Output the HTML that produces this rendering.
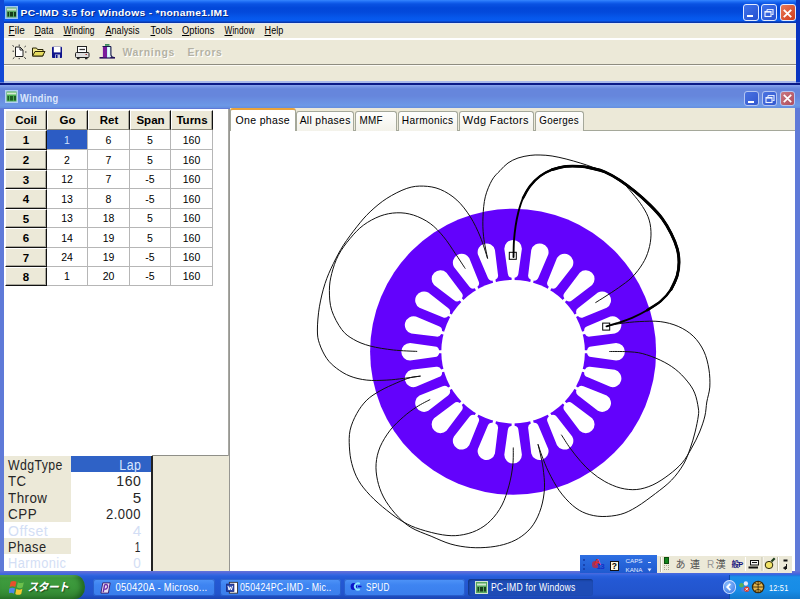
<!DOCTYPE html>
<html>
<head>
<meta charset="utf-8">
<title>PC-IMD 3.5 for Windows</title>
<style>
html,body{margin:0;padding:0;}
body{width:800px;height:599px;overflow:hidden;position:relative;background:#ece9d8;font-family:"Liberation Sans","Noto Sans CJK JP",sans-serif;font-size:11px;color:#000;}
.abs{position:absolute;}
.fx{display:inline-block;white-space:nowrap;transform-origin:0 0;}
#titlebar{left:0;top:0;width:800px;height:23px;background:linear-gradient(#3686ff 0,#1a68f2 2px,#0a52e2 4px,#0247d9 8px,#0349db 12px,#0658ec 18px,#085af0 20.5px,#0a44c0 21.8px,#0a2c9a 23px);}
#title{left:21px;top:6.5px;color:#fff;font-weight:bold;font-size:9.5px;letter-spacing:0.3px;white-space:nowrap;text-shadow:1px 1px 0 #0a2c88;}
.wb{top:4px;width:16px;height:17px;border:1px solid #e4ecff;border-radius:3px;box-sizing:border-box;background:linear-gradient(135deg,#3f72ea,#2450d0);}
.wb.close{background:linear-gradient(135deg,#e87a58,#d23c1c);}
.cb{top:91px;width:15px;height:15px;border:1px solid #b4c6f2;border-radius:3px;box-sizing:border-box;background:linear-gradient(135deg,#4a72e0,#3258d0);}
.cb.close{background:linear-gradient(135deg,#c87880,#b04c5c);}
#menubar{left:4px;top:23px;width:792px;height:15px;background:#ece9d8;}
.mi{top:25px;font-size:10px;white-space:nowrap;letter-spacing:0.1px;}
.mi u{text-decoration:underline;}
#frameL{left:0;top:0;width:4px;height:85px;background:#1148d6;}
#frameR{left:796px;top:0;width:4px;height:85px;background:#0a35c0;}
#childframe{left:0;top:82px;width:800px;height:493px;background:#5f7ad8;}
#childtitle{left:0;top:85px;width:800px;height:23px;background:linear-gradient(#8aa6ee 0,#7494e4 2px,#6686dc 4px,#6686dc 11px,#6a90e2 16px,#6c98e6 20.5px,#6690e0 22.5px,#90a8e0 23px);}
#tabbar{left:230px;top:108px;width:565px;height:23px;background:#ece9d8;}
.tab{top:110.5px;height:20.5px;box-sizing:border-box;border:1px solid #a5a89a;border-bottom:none;border-radius:3px 3px 0 0;background:linear-gradient(#fefefd,#f3f2ea);font-size:11px;text-align:center;line-height:17px;white-space:nowrap;letter-spacing:0.35px;}
.tab.sel{top:108px;height:23px;background:#fff;border-top:2px solid #e8a33c;line-height:20px;}
th,td{padding:0;}
.hd{background:#ece9d8;font-weight:bold;font-size:11.5px;text-align:center;box-sizing:border-box;border-right:1px solid #111;border-bottom:1px solid #111;border-top:1px solid #fff;border-left:1px solid #fff;box-shadow:inset -1px -1px 0 rgba(0,0,0,.28);}
.hd.top{border-bottom:1px solid #8c8a7c;box-shadow:inset -1px 0 0 rgba(0,0,0,.28);}
.cell{background:#fff;font-size:10.5px;text-align:center;box-sizing:border-box;border-right:1px solid #b6b6b6;border-bottom:1px solid #b6b6b6;}
.prow{left:4px;width:147px;height:16.4px;font-size:14px;line-height:18px;color:#262626;}
.prow .fx{position:relative;z-index:2;}
.plab{position:absolute;left:0;top:0;width:67px;height:100%;background:#ece9d8;padding-left:4px;box-sizing:border-box;letter-spacing:0.5px;white-space:nowrap;}
.pval{position:absolute;left:67px;top:0;width:80px;height:100%;background:#fff;text-align:right;padding-right:10px;box-sizing:border-box;letter-spacing:0.5px;}
.dis .plab{background:#fff;color:#d3def5;}
.dis .pval{color:#d3def5;}
#taskbar{left:0;top:571px;width:800px;height:28px;background:linear-gradient(#6674da 0,#5068da 2px,#3868e2 3.5px,#2a60dc 5px,#2459d5 8px,#2254cc 23px,#1b45b2 28px);}
#start{left:0;top:574.5px;width:85px;height:24.5px;border-radius:0 11px 11px 0/0 13px 13px 0;background:linear-gradient(#63b862 0,#3f9c3f 3px,#3a963a 13px,#2e7e2e 25px);box-shadow:inset -4px 0 5px rgba(0,40,0,.4);}
.tb{top:579px;height:17px;border-radius:3px;background:linear-gradient(#5095f8,#3e84f1 35%,#3a7eec);box-shadow:inset 0 0 0 1px rgba(20,60,170,.5);color:#fff;font-size:10.5px;line-height:16px;white-space:nowrap;overflow:hidden;letter-spacing:0.3px;}
.tb.act{background:#1e4cb6;box-shadow:inset 1px 1px 2px #12347e;}
#tray{left:729px;top:575px;width:71px;height:24px;background:linear-gradient(#2470dc 0,#1a8fe8 2px,#178ce6 16px,#1278cc 24px);border-left:1px solid #0d4aa8;box-sizing:border-box;}
</style>
</head>
<body>
<!-- main window frame -->
<div class="abs" id="titlebar"></div>
<div class="abs" id="frameL"></div>
<div class="abs" id="frameR"></div>
<svg class="abs" style="left:5px;top:6px" width="13" height="13" viewBox="0 0 13 13"><rect x="0" y="0" width="13" height="13" fill="#9cc4f4"/><rect x="1.5" y="1.5" width="10" height="10" fill="#58a860"/><rect x="2" y="2.5" width="9" height="2" fill="#cfe6d0"/><rect x="2.5" y="6" width="1.5" height="4.5" fill="#143c1c"/><rect x="5" y="6" width="3" height="4.5" fill="#143c1c"/><rect x="9" y="6" width="2" height="4.5" fill="#143c1c"/></svg>
<div class="abs" id="title"><span class="fx" id="f_title" style="transform:translateX(-0.50px) scaleX(1.080)">PC-IMD 3.5 for Windows - *noname1.IM1</span></div>
<div class="abs wb" style="left:743px"><div class="abs" style="left:3px;top:9.500px;width:6px;height:2.500px;background:#fff"></div></div>
<div class="abs wb" style="left:761px"><svg class="abs" style="left:1px;top:2px" width="12" height="12" viewBox="0 0 12 12"><path d="M4,2.500 h6 v5 h-1.500 M4,2.500 v1.500" stroke="#dbe6ff" stroke-width="1.200" fill="none"/><rect x="2" y="4.500" width="6" height="5" stroke="#eef3ff" stroke-width="1.100" fill="none"/><path d="M2,4.800 h6" stroke="#eef3ff" stroke-width="1.600"/></svg></div>
<div class="abs wb close" style="left:779.500px"><svg class="abs" style="left:2.500px;top:3.500px" width="9" height="9" viewBox="0 0 9 9"><path d="M0.800,0.800 L8.200,8.200 M8.200,0.800 L0.800,8.200" stroke="#fff" stroke-width="1.900"/></svg></div>

<div class="abs" id="menubar"></div>
<div class="abs" style="left:4px;top:23px;width:792px;height:1px;background:#e2e9f6"></div>
<div class="abs mi" style="left:9px"><span class="fx" id="f_m_file" style="transform:translateX(-0.50px) scaleX(0.998)"><u>F</u>ile</span></div>
<div class="abs mi" style="left:35px"><span class="fx" id="f_m_data" style="transform:translateX(-0.50px) scaleX(0.882)"><u>D</u>ata</span></div>
<div class="abs mi" style="left:64px"><span class="fx" id="f_m_winding" style="transform:translateX(-0.50px) scaleX(0.841)"><u>W</u>inding</span></div>
<div class="abs mi" style="left:106px"><span class="fx" id="f_m_analysis" style="transform:translateX(-0.50px) scaleX(0.893)"><u>A</u>nalysis</span></div>
<div class="abs mi" style="left:151px"><span class="fx" id="f_m_tools" style="transform:translateX(-0.50px) scaleX(0.922)"><u>T</u>ools</span></div>
<div class="abs mi" style="left:182px"><span class="fx" id="f_m_options" style="transform:translateX(0.00px) scaleX(0.924)"><u>O</u>ptions</span></div>
<div class="abs mi" style="left:225px"><span class="fx" id="f_m_window" style="transform:translateX(-0.50px) scaleX(0.829)"><u>W</u>indow</span></div>
<div class="abs mi" style="left:265px"><span class="fx" id="f_m_help" style="transform:translateX(-0.50px) scaleX(0.905)"><u>H</u>elp</span></div>
<div class="abs" style="left:4px;top:38px;width:792px;height:2px;background:#fff"></div>
<!-- toolbar icons -->
<svg class="abs" style="left:10px;top:42px" width="110" height="20" viewBox="0 0 110 20">
<path d="M5.500,5 h4.500 l3,3 v6.500 h-7.500 z" fill="#fff" stroke="#222" stroke-width="1"/>
<path d="M10,5 v3 h3" fill="none" stroke="#222" stroke-width="1"/>
<path d="M2.500,3.500 l1.500,1 M9.200,2.500 v1.500 M15.800,4 l-1.300,1 M2.500,9.200 h1.500 M15,10 h1.500 M2.800,16.800 l1.700,-1.500 M9.200,16 v1.200 M16,16.800 l-1.700,-1.500" stroke="#333" stroke-width="1"/>
<path d="M22.500,6 h4 l1,1.500 h5.500 v6.500 h-10.500 z" fill="#f1e98e" stroke="#2a2608" stroke-width="1"/>
<path d="M22.500,14 l2.500,-4.500 h10 l-2.500,4.500 z" fill="#e6dc60" stroke="#2a2608" stroke-width="1"/>
<rect x="42" y="4.800" width="10" height="11.200" rx="0.800" fill="#10148c"/>
<rect x="43.800" y="5" width="6.700" height="5.400" fill="#fff"/>
<rect x="45" y="12.500" width="5" height="3.500" fill="#c8cce0"/>
<rect x="45.800" y="13" width="1.700" height="3" fill="#10148c"/>
<rect x="67.500" y="4.500" width="9" height="6" fill="#fff" stroke="#222" stroke-width="1"/>
<path d="M69.500,7.500 h5.500" stroke="#333" stroke-width="1.300"/>
<rect x="65.500" y="10.500" width="13.500" height="5" rx="1" fill="#dcdcdc" stroke="#222" stroke-width="1"/>
<path d="M67,16.500 h2.500 M75,16.500 h2.500" stroke="#222" stroke-width="1.500"/>
<rect x="75.500" y="12" width="1.500" height="1" fill="#a03030"/>
<path d="M89.500,15.800 h15.500" stroke="#28105c" stroke-width="1.600"/>
<rect x="92.900" y="4.400" width="4.100" height="11" fill="#7a1c9c"/>
<rect x="97" y="5" width="3.400" height="10.400" fill="#c8f2fa"/>
<rect x="98.300" y="5.500" width="1" height="9" fill="#fff"/>
<path d="M100.900,4.500 v8 q0,2.500 3,3" fill="none" stroke="#181850" stroke-width="1.100"/>
<path d="M92.500,4.500 h8.500" stroke="#181850" stroke-width="1"/>
<rect x="95" y="2" width="4.500" height="1.800" fill="#3c8c5c"/>
</svg>
<div class="abs" style="left:123px;top:46px;font-size:10.5px;font-weight:bold;color:#b4b2a4;letter-spacing:0.7px;text-shadow:1px 1px 0 #fff"><span class="fx" id="f_warn" style="transform:translateX(-0.50px) scaleX(0.990)">Warnings</span></div>
<div class="abs" style="left:188px;top:46px;font-size:10.5px;font-weight:bold;color:#b4b2a4;letter-spacing:0.7px;text-shadow:1px 1px 0 #fff"><span class="fx" id="f_err" style="transform:translateX(-0.50px) scaleX(0.980)">Errors</span></div>
<div class="abs" style="left:4px;top:64px;width:792px;height:1px;background:#8e8c80"></div>
<div class="abs" style="left:4px;top:65px;width:792px;height:1px;background:#fbfaf4"></div>

<!-- child window -->
<div class="abs" id="childframe"></div>
<div class="abs" id="childtitle"></div>
<div class="abs" style="left:4px;top:81px;width:792px;height:1.500px;background:#a9baec"></div>
<div class="abs" style="left:0;top:82.500px;width:800px;height:2.500px;background:#0a1a86"></div>
<svg class="abs" style="left:5px;top:90px" width="13" height="13" viewBox="0 0 13 13"><rect x="0" y="0" width="13" height="13" fill="#b4d0f4"/><rect x="1.500" y="1.500" width="10" height="10" fill="#4cb050"/><rect x="2" y="2.500" width="9" height="2" fill="#d4ead4"/><rect x="2.500" y="6" width="1.500" height="4.500" fill="#1c5c24"/><rect x="5" y="6" width="3" height="4.500" fill="#1c5c24"/><rect x="9" y="6" width="2" height="4.500" fill="#1c5c24"/></svg>
<div class="abs" style="left:21px;top:92.5px;color:#dbe6fb;font-weight:bold;font-size:10px;letter-spacing:0.3px"><span class="fx" id="f_ctitle" style="transform:translateX(-0.90px) scaleX(0.926)">Winding</span></div>
<div class="abs cb" style="left:744px"><div class="abs" style="left:3px;top:8.500px;width:6px;height:2.500px;background:#fff"></div></div>
<div class="abs cb" style="left:762px"><svg class="abs" style="left:0.500px;top:1px" width="12" height="12" viewBox="0 0 12 12"><path d="M4,2.500 h6 v5 h-1.500 M4,2.500 v1.500" stroke="#dbe6ff" stroke-width="1.200" fill="none"/><rect x="2" y="4.500" width="6" height="5" stroke="#eef3ff" stroke-width="1.100" fill="none"/><path d="M2,4.800 h6" stroke="#eef3ff" stroke-width="1.600"/></svg></div>
<div class="abs cb close" style="left:780px"><svg class="abs" style="left:2px;top:2px" width="9" height="9" viewBox="0 0 9 9"><path d="M0.800,0.800 L8.200,8.200 M8.200,0.800 L0.800,8.200" stroke="#fff" stroke-width="1.700"/></svg></div>

<!-- left pane -->
<div class="abs" style="left:4px;top:108.500px;width:224px;height:347px;background:#fff"></div>
<div class="abs" style="left:227.500px;top:108.500px;width:2.500px;height:462.500px;background:linear-gradient(90deg,#b0b0aa,#8e8e8a)"></div>
<!-- right pane -->
<div class="abs" style="left:230px;top:131px;width:565px;height:440px;background:#fff"></div>
<div class="abs" id="tabbar"></div>
<div class="abs" style="left:230px;top:130px;width:565px;height:1px;background:#a5a89a"></div>
<div class="abs tab sel" style="left:230px;width:66px"><span class="fx" id="f_tab_one" style="transform:translateX(0.48px) scaleX(0.957)">One phase</span></div>
<div class="abs tab" style="left:296px;width:58px"><span class="fx" id="f_tab_all" style="transform:translateX(1.64px) scaleX(0.940)">All phases</span></div>
<div class="abs tab" style="left:355px;width:42px;text-align:left;padding-left:5px"><span class="fx" id="f_tab_mmf" style="transform:translateX(-1.50px) scaleX(0.900)">MMF</span></div>
<div class="abs tab" style="left:398px;width:60px"><span class="fx" id="f_tab_harm" style="transform:translateX(1.86px) scaleX(0.924)">Harmonics</span></div>
<div class="abs tab" style="left:459px;width:75px"><span class="fx" id="f_tab_wdg" style="transform:translateX(-0.19px) scaleX(0.998)">Wdg Factors</span></div>
<div class="abs tab" style="left:535px;width:49px"><span class="fx" id="f_tab_goe" style="transform:translateX(2.33px) scaleX(0.889)">Goerges</span></div>

<!-- table -->
<table class="abs" style="left:5px;top:110px;border-collapse:separate;border-spacing:0;table-layout:fixed;width:208px">
<colgroup><col style="width:42px"><col style="width:41px"><col style="width:42px"><col style="width:41px"><col style="width:42px"></colgroup>
<tr style="height:20px"><td class="hd top">Coil</td><td class="hd top">Go</td><td class="hd top">Ret</td><td class="hd top">Span</td><td class="hd top">Turns</td></tr>
<tr style="height:20px"><td class="hd">1</td><td class="cell" style="background:#2c5cc4;color:#cfe2ff">1</td><td class="cell">6</td><td class="cell">5</td><td class="cell">160</td></tr>
<tr style="height:20px"><td class="hd">2</td><td class="cell">2</td><td class="cell">7</td><td class="cell">5</td><td class="cell">160</td></tr>
<tr style="height:19px"><td class="hd">3</td><td class="cell">12</td><td class="cell">7</td><td class="cell">-5</td><td class="cell">160</td></tr>
<tr style="height:20px"><td class="hd">4</td><td class="cell">13</td><td class="cell">8</td><td class="cell">-5</td><td class="cell">160</td></tr>
<tr style="height:19px"><td class="hd">5</td><td class="cell">13</td><td class="cell">18</td><td class="cell">5</td><td class="cell">160</td></tr>
<tr style="height:20px"><td class="hd">6</td><td class="cell">14</td><td class="cell">19</td><td class="cell">5</td><td class="cell">160</td></tr>
<tr style="height:19px"><td class="hd">7</td><td class="cell">24</td><td class="cell">19</td><td class="cell">-5</td><td class="cell">160</td></tr>
<tr style="height:19px"><td class="hd">8</td><td class="cell">1</td><td class="cell">20</td><td class="cell">-5</td><td class="cell">160</td></tr>
</table>

<!-- parameter box -->
<div class="abs" style="left:4px;top:456px;width:225px;height:115px;background:#ece9d8"></div>
<div class="abs" style="left:151px;top:456px;width:1.500px;height:115px;background:#222"></div>
<div class="abs" style="left:152px;top:455px;width:76px;height:1px;background:#8f8f88"></div>
<div class="abs prow" style="top:456px"><div class="plab"><span class="fx" id="f_pl_wdgtype" style="transform:translateX(-0.10px) scaleX(0.878)">WdgType</span></div><div class="pval" style="background:#2f62c6;color:#d6e6ff"><span class="fx" id="f_pv_lap" style="transform:translateX(3.36px) scaleX(0.885)">Lap</span></div></div>
<div class="abs prow" style="top:472.400px"><div class="plab"><span class="fx" id="f_pl_tc" style="transform:translateX(0.00px) scaleX(0.940)">TC</span></div><div class="pval"><span class="fx" id="f_pv_160" style="transform:translateX(0.36px) scaleX(1.006)">160</span></div></div>
<div class="abs prow" style="top:488.800px"><div class="plab"><span class="fx" id="f_pl_throw" style="transform:translateX(0.00px) scaleX(0.954)">Throw</span></div><div class="pval"><span class="fx" id="f_pv_5" style="transform:translateX(-0.20px) scaleX(1.085)">5</span></div></div>
<div class="abs prow" style="top:505.200px"><div class="plab"><span class="fx" id="f_pl_cpp" style="transform:translateX(0.00px) scaleX(0.960)">CPP</span></div><div class="pval"><span class="fx" id="f_pv_2000" style="transform:translateX(3.05px) scaleX(0.932)">2.000</span></div></div>
<div class="abs prow dis" style="top:521.600px"><div class="plab"><span class="fx" id="f_pl_offset" style="transform:translateX(0.00px) scaleX(1.003)">Offset</span></div><div class="pval"><span class="fx" id="f_pv_4" style="transform:translateX(-0.20px) scaleX(1.085)">4</span></div></div>
<div class="abs prow" style="top:538px"><div class="plab"><span class="fx" id="f_pl_phase" style="transform:translateX(0.00px) scaleX(0.912)">Phase</span></div><div class="pval"><span class="fx" id="f_pv_1" style="transform:translateX(1.80px) scaleX(0.723)">1</span></div></div>
<div class="abs prow dis" style="top:554.400px;height:16.600px"><div class="plab"><span class="fx" id="f_pl_harmonic" style="transform:translateX(0.00px) scaleX(0.915)">Harmonic</span></div><div class="pval"><span class="fx" id="f_pv_0" style="transform:translateX(0.30px) scaleX(0.964)">0</span></div></div>

<svg width="800" height="599" viewBox="0 0 800 599" style="position:absolute;left:0;top:0">
<circle cx="513.1" cy="351.7" r="143.0" fill="#6302fc"/>
<circle cx="513.1" cy="351.7" r="71.8" fill="#fff"/>
<path d="M583.90,353.20 L587.10,353.20 Q587.70,356.70 591.30,357.00 L616.10,360.50 A8.80,8.80 0 0 0 616.10,342.90 L591.30,346.40 Q587.70,346.70 587.10,350.20 L583.90,350.20 Z M581.88,334.82 L584.97,334.00 Q586.45,337.22 590.01,336.58 L614.87,333.54 A8.80,8.80 0 0 0 610.31,316.54 L587.26,326.34 Q583.86,327.56 584.19,331.10 L581.10,331.93 Z M575.16,317.60 L577.94,316.00 Q580.21,318.73 583.47,317.19 L606.70,307.82 A8.80,8.80 0 0 0 597.90,292.58 L578.17,308.01 Q575.21,310.07 576.44,313.40 L573.66,315.00 Z M564.22,302.70 L566.49,300.43 Q569.39,302.49 572.14,300.15 L592.15,285.09 A8.80,8.80 0 0 0 579.71,272.65 L564.65,292.66 Q562.31,295.41 564.37,298.31 L562.10,300.58 Z M549.80,291.14 L551.40,288.36 Q554.73,289.59 556.79,286.63 L572.22,266.90 A8.80,8.80 0 0 0 556.98,258.10 L547.61,281.33 Q546.07,284.59 548.80,286.86 L547.20,289.64 Z M532.87,283.70 L533.70,280.61 Q537.24,280.94 538.46,277.54 L548.26,254.49 A8.80,8.80 0 0 0 531.26,249.93 L528.22,274.79 Q527.58,278.35 530.80,279.83 L529.98,282.92 Z M514.60,280.90 L514.60,277.70 Q518.10,277.10 518.40,273.50 L521.90,248.70 A8.80,8.80 0 0 0 504.30,248.70 L507.80,273.50 Q508.10,277.10 511.60,277.70 L511.60,280.90 Z M496.22,282.92 L495.40,279.83 Q498.62,278.35 497.98,274.79 L494.94,249.93 A8.80,8.80 0 0 0 477.94,254.49 L487.74,277.54 Q488.96,280.94 492.50,280.61 L493.33,283.70 Z M479.00,289.64 L477.40,286.86 Q480.13,284.59 478.59,281.33 L469.22,258.10 A8.80,8.80 0 0 0 453.98,266.90 L469.41,286.63 Q471.47,289.59 474.80,288.36 L476.40,291.14 Z M464.10,300.58 L461.83,298.31 Q463.89,295.41 461.55,292.66 L446.49,272.65 A8.80,8.80 0 0 0 434.05,285.09 L454.06,300.15 Q456.81,302.49 459.71,300.43 L461.98,302.70 Z M452.54,315.00 L449.76,313.40 Q450.99,310.07 448.03,308.01 L428.30,292.58 A8.80,8.80 0 0 0 419.50,307.82 L442.73,317.19 Q445.99,318.73 448.26,316.00 L451.04,317.60 Z M445.10,331.93 L442.01,331.10 Q442.34,327.56 438.94,326.34 L415.89,316.54 A8.80,8.80 0 0 0 411.33,333.54 L436.19,336.58 Q439.75,337.22 441.23,334.00 L444.32,334.82 Z M442.30,350.20 L439.10,350.20 Q438.50,346.70 434.90,346.40 L410.10,342.90 A8.80,8.80 0 0 0 410.10,360.50 L434.90,357.00 Q438.50,356.70 439.10,353.20 L442.30,353.20 Z M444.32,368.58 L441.23,369.40 Q439.75,366.18 436.19,366.82 L411.33,369.86 A8.80,8.80 0 0 0 415.89,386.86 L438.94,377.06 Q442.34,375.84 442.01,372.30 L445.10,371.47 Z M451.04,385.80 L448.26,387.40 Q445.99,384.67 442.73,386.21 L419.50,395.58 A8.80,8.80 0 0 0 428.30,410.82 L448.03,395.39 Q450.99,393.33 449.76,390.00 L452.54,388.40 Z M461.98,400.70 L459.71,402.97 Q456.81,400.91 454.06,403.25 L434.05,418.31 A8.80,8.80 0 0 0 446.49,430.75 L461.55,410.74 Q463.89,407.99 461.83,405.09 L464.10,402.82 Z M476.40,412.26 L474.80,415.04 Q471.47,413.81 469.41,416.77 L453.98,436.50 A8.80,8.80 0 0 0 469.22,445.30 L478.59,422.07 Q480.13,418.81 477.40,416.54 L479.00,413.76 Z M493.33,419.70 L492.50,422.79 Q488.96,422.46 487.74,425.86 L477.94,448.91 A8.80,8.80 0 0 0 494.94,453.47 L497.98,428.61 Q498.62,425.05 495.40,423.57 L496.22,420.48 Z M511.60,422.50 L511.60,425.70 Q508.10,426.30 507.80,429.90 L504.30,454.70 A8.80,8.80 0 0 0 521.90,454.70 L518.40,429.90 Q518.10,426.30 514.60,425.70 L514.60,422.50 Z M529.98,420.48 L530.80,423.57 Q527.58,425.05 528.22,428.61 L531.26,453.47 A8.80,8.80 0 0 0 548.26,448.91 L538.46,425.86 Q537.24,422.46 533.70,422.79 L532.87,419.70 Z M547.20,413.76 L548.80,416.54 Q546.07,418.81 547.61,422.07 L556.98,445.30 A8.80,8.80 0 0 0 572.22,436.50 L556.79,416.77 Q554.73,413.81 551.40,415.04 L549.80,412.26 Z M562.10,402.82 L564.37,405.09 Q562.31,407.99 564.65,410.74 L579.71,430.75 A8.80,8.80 0 0 0 592.15,418.31 L572.14,403.25 Q569.39,400.91 566.49,402.97 L564.22,400.70 Z M573.66,388.40 L576.44,390.00 Q575.21,393.33 578.17,395.39 L597.90,410.82 A8.80,8.80 0 0 0 606.70,395.58 L583.47,386.21 Q580.21,384.67 577.94,387.40 L575.16,385.80 Z M581.10,371.47 L584.19,372.30 Q583.86,375.84 587.26,377.06 L610.31,386.86 A8.80,8.80 0 0 0 614.87,369.86 L590.01,366.82 Q586.45,366.18 584.97,369.40 L581.88,368.58 Z" fill="#fff"/>
<path d="M595.4,302.7 C597.0,301.7 601.1,299.2 605.0,296.7 C608.9,294.2 614.1,290.9 618.6,287.7 C623.1,284.4 628.1,281.2 632.1,277.2 C636.1,273.2 639.9,268.2 642.6,263.7 C645.4,259.2 647.2,254.9 648.6,250.1 C650.0,245.3 650.9,240.1 651.0,235.1 C651.1,230.1 650.6,224.8 649.2,220.1 C647.8,215.3 645.5,211.1 642.6,206.6 C639.8,202.1 635.9,197.4 632.1,193.0 C628.4,188.6 624.8,183.9 620.1,180.4 C615.5,176.9 608.9,174.2 604.2,172.0 C599.6,169.8 596.2,168.5 592.2,167.0 C588.2,165.5 584.6,164.3 580.2,163.0 C575.9,161.7 570.8,160.2 566.1,159.0 C561.4,157.8 556.4,156.7 552.1,156.0 C547.8,155.3 543.8,155.1 540.1,155.0 C536.4,154.9 533.8,154.9 530.1,155.4 C526.4,155.9 521.7,156.7 518.0,158.0 C514.3,159.3 511.0,160.9 508.0,163.0 C505.0,165.1 502.7,167.8 500.0,170.7 C497.3,173.5 494.4,175.8 492.0,180.1 C489.6,184.4 486.8,190.7 485.3,196.8 C483.8,202.9 483.3,210.1 483.0,216.8 C482.7,223.5 482.8,229.9 483.6,236.8 C484.4,243.8 486.9,254.9 487.6,258.5" fill="none" stroke="#111" stroke-width="1"/>
<path d="M487.6,258.5 C486.4,254.9 483.2,243.8 480.3,236.8 C477.4,229.9 474.2,222.9 470.3,216.8 C466.4,210.7 461.9,204.7 456.9,200.1 C451.9,195.5 445.8,191.7 440.2,189.4 C434.6,187.1 429.1,186.3 423.5,186.1 C417.9,185.9 412.9,186.3 406.8,188.4 C400.7,190.5 392.9,194.5 386.8,198.4 C380.7,202.3 375.1,207.1 370.1,211.8 C365.1,216.5 361.2,221.2 356.8,226.8 C352.4,232.4 347.3,239.1 343.4,245.2 C339.5,251.3 336.5,257.1 333.4,263.5 C330.3,269.9 327.3,276.4 325.0,283.6 C322.7,290.8 320.7,299.1 319.4,306.8 C318.1,314.5 317.4,323.9 317.4,330.0 C317.4,336.1 317.8,338.7 319.4,343.4 C320.9,348.1 323.8,354.2 326.7,358.4 C329.6,362.6 332.8,365.4 336.7,368.4 C340.6,371.3 345.0,374.2 350.0,376.1 C355.0,378.1 360.7,379.4 366.8,380.1 C372.9,380.8 380.7,380.4 386.8,380.1 C392.9,379.8 397.9,379.1 403.5,378.4 C409.1,377.7 417.7,376.5 420.5,376.1" fill="none" stroke="#111" stroke-width="1"/>
<path d="M465.3,268.6 C463.6,266.1 458.9,258.8 455.3,253.5 C451.7,248.2 447.8,241.8 443.6,236.8 C439.4,231.8 435.2,227.1 430.2,223.5 C425.2,219.9 419.1,216.9 413.5,215.1 C407.9,213.3 402.4,212.6 396.8,212.8 C391.2,213.0 385.7,214.0 380.1,216.1 C374.5,218.2 368.4,221.5 363.4,225.2 C358.4,228.9 354.3,233.5 350.1,238.5 C345.9,243.5 341.5,249.3 338.4,255.2 C335.3,261.1 333.2,267.8 331.7,273.6 C330.2,279.5 329.4,284.2 329.4,290.3 C329.4,296.4 329.6,303.8 331.7,310.3 C333.8,316.8 338.1,324.7 341.7,329.5 C345.3,334.3 348.7,336.6 353.4,339.3 C358.1,342.1 363.4,344.2 370.1,346.0 C376.8,347.8 385.6,349.1 393.5,350.0 C401.4,350.9 413.2,351.2 417.2,351.4" fill="none" stroke="#111" stroke-width="1"/>
<path d="M420.5,376.1 C418.8,376.4 414.1,376.6 410.2,377.7 C406.2,378.8 401.8,380.6 396.8,382.8 C391.8,385.0 385.1,387.9 380.1,390.8 C375.1,393.7 370.7,396.3 366.8,400.1 C362.9,403.9 359.6,408.5 356.8,413.5 C354.0,418.5 351.3,424.6 350.1,430.2 C348.9,435.8 349.1,441.3 349.4,446.9 C349.7,452.5 350.3,458.0 351.8,463.6 C353.3,469.2 355.3,475.0 358.4,480.3 C361.4,485.6 365.4,490.3 370.1,495.3 C374.8,500.3 381.2,505.9 386.8,510.3 C392.4,514.8 397.9,518.8 403.5,522.0 C409.1,525.2 413.7,527.2 420.2,529.3 C426.7,531.4 435.9,533.8 442.4,534.8 C448.9,535.8 453.7,536.0 459.4,535.3 C465.1,534.6 471.3,533.0 476.5,530.5 C481.7,528.0 486.4,524.9 490.6,520.6 C494.9,516.4 498.9,510.9 502.0,505.0 C505.1,499.1 507.3,491.7 509.1,485.1 C510.9,478.5 512.1,471.5 512.8,465.2 C513.5,458.9 513.2,450.4 513.3,447.5" fill="none" stroke="#111" stroke-width="1"/>
<path d="M430.2,399.5 C428.0,400.7 421.3,403.9 416.9,406.8 C412.4,409.7 407.9,412.9 403.5,416.8 C399.1,420.7 394.1,425.2 390.2,430.2 C386.3,435.2 382.5,441.3 380.1,446.9 C377.8,452.5 376.5,458.0 376.1,463.6 C375.7,469.2 376.3,474.7 377.5,480.3 C378.7,485.9 380.6,491.4 383.5,497.0 C386.4,502.6 390.8,508.6 395.2,513.6 C399.6,518.6 404.2,523.2 410.2,527.0 C416.2,530.8 424.3,533.4 431.1,536.2 C437.9,539.1 444.3,542.2 450.9,544.1 C457.5,546.0 464.2,547.0 470.8,547.5 C477.4,548.0 484.5,547.7 490.6,547.0 C496.8,546.3 502.5,545.1 507.7,543.3 C512.9,541.5 517.5,539.3 521.8,536.2 C526.0,533.1 530.0,529.5 533.2,524.8 C536.4,520.1 539.2,514.0 541.1,507.8 C543.0,501.7 544.2,494.5 544.5,487.9 C544.8,481.3 543.8,473.8 543.1,468.1 C542.4,462.4 541.1,457.9 540.3,453.9 C539.4,449.9 538.4,445.9 538.0,444.3" fill="none" stroke="#111" stroke-width="1"/>
<path d="M609.3,351.5 C612.3,351.5 621.6,351.4 627.1,351.7 C632.6,352.0 636.7,352.1 642.2,353.5 C647.7,354.9 654.7,357.5 660.2,360.1 C665.7,362.7 670.7,365.6 675.2,369.1 C679.7,372.6 684.0,377.1 687.2,381.1 C690.5,385.1 692.9,388.6 694.7,393.1 C696.6,397.6 697.7,404.2 698.3,408.0 C698.9,411.8 698.8,412.0 698.3,416.0 C697.8,420.0 696.4,426.6 695.1,432.0 C693.8,437.4 692.2,442.8 690.3,448.1 C688.4,453.5 686.7,458.8 683.6,464.1 C680.5,469.4 676.3,475.2 671.6,480.1 C666.9,485.0 661.3,489.1 655.5,493.5 C649.7,497.9 642.6,503.3 636.8,506.8 C631.0,510.3 626.6,512.7 620.8,514.3 C615.0,515.9 607.9,516.6 602.1,516.5 C596.3,516.4 591.0,515.3 586.1,513.5 C581.2,511.7 577.2,509.3 572.7,505.5 C568.2,501.7 563.4,496.4 559.4,490.8 C555.4,485.2 551.6,477.9 548.7,472.1 C545.8,466.3 543.8,460.7 542.0,456.1 C540.2,451.5 538.7,446.3 538.0,444.3" fill="none" stroke="#111" stroke-width="1"/>
<path d="M606.5,326.3 C608.9,325.8 615.6,324.2 621.1,323.4 C626.6,322.6 632.7,321.9 639.2,321.6 C645.7,321.3 653.7,320.8 660.2,321.6 C666.7,322.4 672.7,324.0 678.2,326.4 C683.7,328.8 688.9,332.0 693.2,336.1 C697.5,340.2 701.2,345.6 703.8,351.1 C706.4,356.6 707.9,363.1 708.9,369.1 C709.9,375.1 710.1,381.6 709.8,387.1 C709.4,392.6 707.6,397.2 706.8,402.0 C706.0,406.8 706.1,411.0 704.9,416.0 C703.7,421.0 701.8,426.6 699.6,432.0 C697.4,437.4 694.5,443.0 691.6,448.1 C688.7,453.2 686.0,458.4 682.2,462.8 C678.4,467.2 673.8,471.1 668.9,474.8 C664.0,478.5 658.2,482.4 652.9,484.9 C647.5,487.3 642.1,489.0 636.8,489.5 C631.4,490.0 626.1,489.4 620.8,488.1 C615.5,486.8 609.7,484.2 604.8,481.5 C599.9,478.8 595.4,475.5 591.4,472.1 C587.4,468.8 584.2,465.4 580.7,461.4 C577.2,457.4 573.3,452.6 570.1,448.1 C566.9,443.7 562.8,436.9 561.3,434.7" fill="none" stroke="#111" stroke-width="1"/>
<path d="M513.5,257.0 C513.6,254.2 513.6,245.3 514.0,240.2 C514.4,235.1 514.9,230.9 515.6,226.2 C516.3,221.5 517.2,216.8 518.4,212.1 C519.6,207.4 521.0,202.4 523.0,198.1 C525.0,193.8 527.2,189.8 530.1,186.1 C533.0,182.4 536.4,178.8 540.1,176.1 C543.8,173.3 547.8,171.2 552.1,169.6 C556.4,168.0 561.4,166.9 566.1,166.4 C570.8,165.9 575.9,166.1 580.2,166.4 C584.6,166.7 588.1,167.5 592.2,168.4 C596.3,169.3 600.4,170.0 605.0,172.0 C609.6,174.0 615.1,177.1 620.1,180.4 C625.1,183.7 630.1,187.5 635.1,191.6 C640.1,195.7 645.6,200.6 650.1,205.1 C654.6,209.6 658.7,213.8 662.2,218.6 C665.7,223.3 668.7,228.6 671.2,233.6 C673.7,238.6 675.9,243.8 677.2,248.6 C678.5,253.4 679.0,257.7 679.0,262.2 C679.0,266.7 678.5,271.2 677.2,275.7 C675.9,280.2 674.0,284.9 671.2,289.2 C668.5,293.4 664.7,297.7 660.7,301.2 C656.7,304.7 651.9,307.4 647.1,310.2 C642.3,313.0 637.1,315.6 632.1,317.8 C627.1,320.0 621.4,321.8 617.1,323.2 C612.8,324.6 608.3,325.8 606.5,326.3" fill="none" stroke="#000" stroke-width="1.9" stroke-linecap="round"/>
<path d="M523.0,198.1 C524.2,196.1 527.2,189.8 530.1,186.1 C533.0,182.4 536.4,178.8 540.1,176.1 C543.8,173.3 547.8,171.2 552.1,169.6 C556.4,168.0 561.4,166.9 566.1,166.4 C570.8,165.9 575.9,166.1 580.2,166.4 C584.6,166.7 588.1,167.5 592.2,168.4 C596.3,169.3 600.4,170.0 605.0,172.0 C609.6,174.0 615.1,177.1 620.1,180.4 C625.1,183.7 630.1,187.5 635.1,191.6 C640.1,195.7 645.6,200.6 650.1,205.1 C654.6,209.6 658.7,213.8 662.2,218.6 C665.7,223.3 668.7,228.6 671.2,233.6 C673.7,238.6 675.9,243.8 677.2,248.6 C678.5,253.4 679.0,257.7 679.0,262.2 C679.0,266.7 678.5,271.2 677.2,275.7 C675.9,280.2 674.0,284.9 671.2,289.2 C668.5,293.4 664.7,297.7 660.7,301.2 C656.7,304.7 649.4,308.7 647.1,310.2" fill="none" stroke="#000" stroke-width="2.4" stroke-linecap="round"/>
<path d="M552.1,169.6 C554.4,169.1 561.4,166.9 566.1,166.4 C570.8,165.9 575.9,166.1 580.2,166.4 C584.6,166.7 588.1,167.5 592.2,168.4 C596.3,169.3 600.4,170.0 605.0,172.0 C609.6,174.0 615.1,177.1 620.1,180.4 C625.1,183.7 630.1,187.5 635.1,191.6 C640.1,195.7 645.6,200.6 650.1,205.1 C654.6,209.6 658.7,213.8 662.2,218.6 C665.7,223.3 668.7,228.6 671.2,233.6 C673.7,238.6 675.9,243.8 677.2,248.6 C678.5,253.4 679.0,257.7 679.0,262.2 C679.0,266.7 678.5,271.2 677.2,275.7 C675.9,280.2 672.2,286.9 671.2,289.2" fill="none" stroke="#000" stroke-width="2.9" stroke-linecap="round"/>
<rect x="509.3" y="252.3" width="7" height="7" fill="none" stroke="#000" stroke-width="1"/>
<rect x="602.7" y="323.1" width="7" height="7" fill="none" stroke="#000" stroke-width="1"/>
</svg>

<!-- taskbar -->
<div class="abs" id="taskbar"></div>
<div class="abs" id="start"></div>
<svg class="abs" style="left:9px;top:578.5px" width="16" height="16" viewBox="0 0 14 14"><path d="M1.500,2.500 q2.500,-1.500 5,0 l-1,4.500 q-2.500,-1.500 -5,0 z" fill="#e8502c"/><path d="M7.800,2.800 q2.500,1.500 5.200,0 l-1,4.500 q-2.500,1.500 -5.200,0 z" fill="#6cc04c"/><path d="M0.300,8.300 q2.500,-1.500 5,0 l-1,4.500 q-2.500,-1.500 -5,0 z" fill="#4c88e8"/><path d="M6.500,8.600 q2.500,1.500 5.200,0 l-1,4.500 q-2.500,1.500 -5.200,0 z" fill="#f4c830"/></svg>
<div class="abs" style="left:29px;top:578px;color:#fff;font-weight:bold;font-style:italic;font-size:11.5px;line-height:18px;letter-spacing:-0.5px;text-shadow:1px 1px 1px #1c4c1c;white-space:nowrap"><span class="fx" id="f_start" style="transform:translateX(-1.50px) scaleX(0.932)">スタート</span></div>
<div class="abs tb" style="left:93px;width:122px"><span class="fx" id="f_tb1" style="margin-left:24px;transform:translateX(-1.50px) scaleX(0.899)">050420A - Microso...</span></div>
<svg class="abs" style="left:100px;top:580.5px" width="13" height="14" viewBox="0 0 14 15"><path d="M3,2 h8 l-2,11 h-8 z" fill="#e8e0f4" stroke="#3a1c6c"/><path d="M5,4 q4,-1 3,3 q-1,2 -3,2 M5,4 l-1.500,8" stroke="#6c2ca8" stroke-width="1.500" fill="none"/></svg>
<div class="abs tb" style="left:220px;width:121px"><span class="fx" id="f_tb2" style="margin-left:22px;transform:translateX(-2.00px) scaleX(0.833)">050424PC-IMD - Mic..</span></div>
<svg class="abs" style="left:225.5px;top:581px" width="13" height="13.5" viewBox="0 0 14 15"><rect x="3.500" y="1.500" width="9" height="12" fill="#fff" stroke="#333"/><rect x="0.500" y="3.500" width="8" height="8" fill="#2c4cb0" stroke="#14247c"/><path d="M2,5.500 l1.200,4.500 l1.300,-3.500 l1.300,3.500 l1.200,-4.500" stroke="#fff" fill="none" stroke-width="1.100"/></svg>
<div class="abs tb" style="left:344px;width:121px"><span class="fx" id="f_tb3" style="margin-left:32px;transform:translateX(-10.00px) scaleX(0.774)">SPUD</span></div>
<svg class="abs" style="left:350px;top:582px" width="13" height="9" viewBox="0 0 13 9"><ellipse cx="3.800" cy="4.500" rx="3.200" ry="3.600" fill="#0c14c8"/><path d="M9.800,1.800 a3.200,3.200 0 1 0 0,5.400" fill="none" stroke="#8ae6ff" stroke-width="2"/><path d="M8,4.500 h3.500" stroke="#0c14c8" stroke-width="1.500"/></svg>
<div class="abs tb act" style="left:468px;width:125px"><span class="fx" id="f_tb4" style="margin-left:25px;transform:translateX(-2.10px) scaleX(0.818)">PC-IMD for Windows</span></div>
<svg class="abs" style="left:475px;top:581px" width="13" height="13" viewBox="0 0 13 13"><rect x="0" y="0" width="13" height="13" fill="#cfe4d0"/><rect x="1" y="1" width="11" height="11" fill="#58a860"/><rect x="2" y="2.500" width="9" height="2" fill="#cfe6d0"/><rect x="2.500" y="6" width="1.500" height="4.500" fill="#143c1c"/><rect x="5" y="6" width="3" height="4.500" fill="#143c1c"/><rect x="9" y="6" width="2" height="4.500" fill="#143c1c"/></svg>
<div class="abs" id="tray"></div>
<div class="abs" style="left:723px;top:580px;width:13px;height:14px;border-radius:8px;background:radial-gradient(circle at 40% 35%,#8cc0ff,#2a68e0);box-shadow:0 0 0 1px #cfe0ff inset"></div>
<svg class="abs" style="left:725px;top:583px" width="8" height="8" viewBox="0 0 9 9"><path d="M6,1 L2.500,4.500 L6,8" stroke="#fff" stroke-width="2" fill="none"/></svg>
<svg class="abs" style="left:738px;top:580px" width="28" height="14" viewBox="0 0 32 16"><circle cx="4" cy="6" r="2.500" fill="#58b058"/><circle cx="9" cy="4" r="2.500" fill="#e8e8f8"/><circle cx="6" cy="11" r="2.500" fill="#4880e0"/><circle cx="10" cy="10.500" r="3" fill="#e03828"/><path d="M8.500,9 l3,3 M11.500,9 l-3,3" stroke="#fff" stroke-width="1"/><circle cx="23" cy="8" r="6.500" fill="#e8b84c" stroke="#3a2c0c" stroke-width="1.500"/><path d="M17,8 h12 M23,2 v12 M19.500,4 q3.500,2.500 7,0 M19.500,12 q3.500,-2.500 7,0" stroke="#3a2c0c" stroke-width="1" fill="none"/></svg>
<div class="abs" style="left:769px;top:581px;color:#fff;font-size:9.5px;line-height:13px;letter-spacing:0.3px"><span class="fx" id="f_clock" style="transform:translateX(-0.10px) scaleX(0.775)">12:51</span></div>
<!-- language bar -->
<div class="abs" style="left:580px;top:555px;width:77px;height:18px;background:linear-gradient(#2e6fe2,#1f5ad0)"></div>
<div class="abs" style="left:657px;top:555px;width:135px;height:18px;background:#ece9d8;border-top:1px solid #fff;box-sizing:border-box"></div>
<div class="abs" style="left:583px;top:559px;width:2px;height:11px;border-left:2px dotted #1844b0"></div>
<div class="abs" style="left:592px;top:561px;width:6px;height:7px;background:#c02840;border-radius:3px 1px 1px 3px;opacity:.8"></div>
<div class="abs" style="left:594px;top:557px;font-size:9.500px;font-weight:bold;color:#e62a2a;line-height:10px">A</div>
<div class="abs" style="left:596.500px;top:563px;font-size:8px;font-weight:bold;color:#1430c8;line-height:8px;letter-spacing:-0.8px">13</div>
<div class="abs" style="left:610px;top:560.500px;width:8.500px;height:10px;background:#fbf8e4;border:1px solid #111;box-sizing:border-box;font-size:8.500px;font-weight:bold;line-height:8px;text-align:center">?</div>
<div class="abs" style="left:626px;top:557px;font-size:6px;color:#e6eeff;line-height:8px;white-space:nowrap"><span class="fx" id="f_caps" style="transform:translateX(-0.50px) scaleX(1.040)">CAPS</span></div>
<div class="abs" style="left:626px;top:565.500px;font-size:6px;color:#e6eeff;line-height:8px;white-space:nowrap"><span class="fx" id="f_kana" style="transform:translateX(-0.50px) scaleX(1.040)">KANA</span></div>
<div class="abs" style="left:648px;top:561.500px;width:3px;height:1.500px;background:#dfe8ff"></div>
<svg class="abs" style="left:647px;top:567.500px" width="5" height="4" viewBox="0 0 5 4"><path d="M0.500,0.500 h4 l-2,3 z" fill="#dfe8ff"/></svg>
<div class="abs" style="left:660px;top:557px;width:2px;height:15px;border-left:1px solid #b8b4a0;border-right:1px solid #fff;box-sizing:border-box"></div>
<div class="abs" style="left:664px;top:557px;width:5px;height:6.500px;background:#14841c;border:1px solid #0c4c0c;box-sizing:border-box"></div>
<div class="abs" style="left:664px;top:565px;width:5px;height:5px;border:1px dotted #a8a494;box-sizing:border-box"></div>
<div class="abs" style="left:675.500px;top:558px;font-size:10px;line-height:13px;color:#555">あ</div>
<div class="abs" style="left:690px;top:558px;font-size:10px;line-height:13px;color:#4a4a4a">連</div>
<div class="abs" style="left:707px;top:558px;font-size:10px;line-height:13px;color:#9a9a9a;white-space:nowrap">R<span style="color:#4a4a4a;margin-left:1.500px">漢</span></div>
<div class="abs" style="left:731.500px;top:560px;font-size:7.500px;line-height:9px;color:#14147c;font-weight:bold;letter-spacing:-0.8px;white-space:nowrap">般P</div>
<svg class="abs" style="left:745px;top:556px" width="48" height="16" viewBox="0 0 48 16">
<path d="M0.500,1 v14 M18,1 v14 M33.500,1 v14" stroke="#fff"/><path d="M-0.500,1 v14 M17,1 v14 M32.500,1 v14" stroke="#c4c0ac"/>
<rect x="5.500" y="4.500" width="8" height="4.500" fill="#f4f4f4" stroke="#111"/><path d="M7,6.500 h5" stroke="#111" stroke-width="1"/><path d="M3.500,11.500 h9.500" stroke="#111" stroke-width="2"/>
<ellipse cx="24" cy="9" rx="3.800" ry="3.600" fill="#f2e468" stroke="#2a2608"/><path d="M26.500,5.500 l3.200,-3.200" stroke="#1c3c1c" stroke-width="2.200"/>
<path d="M38.500,4.500 h4" stroke="#111" stroke-width="2"/><path d="M41.500,8 v5 M40.500,10.500 l-2,1.500 l2,1.500 z" stroke="#111" stroke-width="1" fill="#111"/>
</svg>

</body>
</html>
